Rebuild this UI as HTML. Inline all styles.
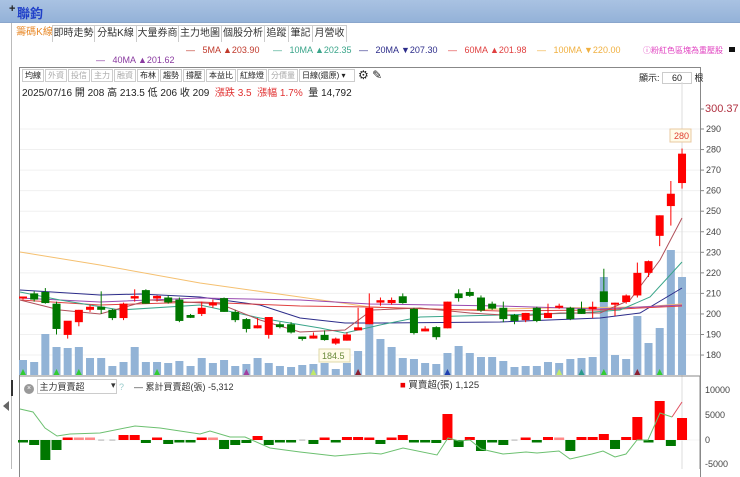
<!DOCTYPE html>
<html><head><meta charset="utf-8">
<style>
*{margin:0;padding:0;box-sizing:border-box}
body{width:740px;height:469px;overflow:hidden;background:#fff;font-family:"Liberation Sans","Noto Sans CJK TC",sans-serif;position:relative}
.top{position:absolute;left:0;top:0;width:740px;height:23px;background:linear-gradient(#a9c2e2,#94b2d8);border-bottom:1px solid #8aa6cc}
.top .t{position:absolute;left:17px;top:3px;font-size:13px;font-weight:bold;color:#1f3fc8}
.top .p{position:absolute;left:9px;top:3px;font-size:11px;color:#222;font-weight:bold}
.side{position:absolute;left:0;top:23px;width:12px;height:446px;border-right:1px solid #bbb;background:#fff}
.tabs{position:absolute;left:16px;top:25px;height:18px;display:flex}
.tabs div{font-size:10px;color:#333;border:1px solid #ccc;border-bottom:none;height:17px;line-height:15px;text-align:center;background:#fff;margin-right:-1px;white-space:nowrap;overflow:hidden}
.tabs div.a{color:#e88a2a;border:none}
.ma{position:absolute;font-size:9px;white-space:nowrap}
.frame{position:absolute;left:19px;top:67px;width:682px;height:410px;border:1px solid #888;border-bottom:none}
.tb{position:absolute;left:22px;top:69px;display:flex;font-size:8px}
.tb span{border:1px solid #ccc;padding:1px 2px;margin-right:1px;color:#222;height:13px;line-height:10px}
.tb span.g{color:#aaa}
.info{position:absolute;left:22px;top:84px;font-size:10px;color:#222;white-space:nowrap}
.ax{position:absolute;left:705px;font-size:9px;color:#444}
</style></head><body>
<div class="top"><span class="p">+</span><span class="t">聯鈞</span></div>
<div class="side"><div style="position:absolute;left:11px;top:357px;width:2px;height:16px;background:#333"></div><div style="position:absolute;left:3px;top:378px;width:0;height:0;border-top:5px solid transparent;border-bottom:5px solid transparent;border-right:6px solid #666"></div></div>
<div class="tabs"><div class="a" style="width:37px">籌碼K線</div><div style="width:43px">即時走勢</div><div style="width:43px">分點K線</div><div style="width:43px">大量券商</div><div style="width:44px">主力地圖</div><div style="width:44px">個股分析</div><div style="width:25px">追蹤</div><div style="width:25px">筆記</div><div style="width:35px">月營收</div></div>
<div class="ma" style="left:186px;top:45px;color:#c0392b">—&nbsp;&nbsp;&nbsp;5MA ▲203.90</div>
<div class="ma" style="left:273px;top:45px;color:#3aa58a">—&nbsp;&nbsp;&nbsp;10MA ▲202.35</div>
<div class="ma" style="left:359px;top:45px;color:#2c2c8a">—&nbsp;&nbsp;&nbsp;20MA ▼207.30</div>
<div class="ma" style="left:448px;top:45px;color:#e04040">—&nbsp;&nbsp;&nbsp;60MA ▲201.98</div>
<div class="ma" style="left:537px;top:45px;color:#f0b040">—&nbsp;&nbsp;&nbsp;100MA ▼220.00</div>
<div class="ma" style="left:643px;top:45px;color:#e040c0;font-size:8px">ⓘ粉紅色區塊為重壓股</div>
<div style="position:absolute;left:729px;top:47px;width:6px;height:5px;background:#111"></div>
<div class="ma" style="left:96px;top:55px;color:#8a3aa0">—&nbsp;&nbsp;&nbsp;40MA ▲201.62</div>
<div class="frame"></div>
<div class="tb"><span>均線</span><span class="g">外資</span><span class="g">投信</span><span class="g">主力</span><span class="g">融資</span><span>布林</span><span>趨勢</span><span>撐壓</span><span>本益比</span><span>紅綠燈</span><span class="g">分價量</span><span style="width:56px">日線(還原) ▾</span><span style="border:none;font-size:12px;line-height:11px">⚙ ✎</span></div>
<div class="ma" style="left:639px;top:71px;color:#222">顯示: <span style="display:inline-block;width:30px;border:1px solid #ccc;text-align:center">60</span> 根</div>
<div class="info">2025/07/16 開 208 高 213.5 低 206 收 209 &nbsp;<span style="color:#e03030">漲跌 3.5 &nbsp;漲幅 1.7%</span> &nbsp;量 14,792</div>
<div class="ax" style="top:103px;font-size:11px;color:#b03040">300.37</div>
<svg id="s" width="740" height="469" style="position:absolute;left:0;top:0"></svg>
<div class="ma" style="left:24px;top:379px;font-size:9px;color:#333"><span style="display:inline-block;width:10px;height:10px;border-radius:5px;background:#999;color:#fff;font-size:7px;text-align:center;line-height:10px">×</span> <span style="display:inline-block;width:80px;border:1px solid #ccc;padding-left:2px">主力買賣超 <span style="float:right">▾</span></span> <span style="color:#9cc">?</span>&nbsp;&nbsp;&nbsp; — 累計買賣超(張) -5,312</div>
<div class="ma" style="left:400px;top:377px;font-size:9.5px;color:#333"><span style="color:#e00">■</span> 買賣超(張) 1,125</div>
<div class="ax" style="top:385px">10000</div><div class="ax" style="top:410px">5000</div><div class="ax" style="top:435px">0</div><div class="ax" style="top:459px">-5000</div>
<script>
var C=[[208,208.5,207,208],[210,211,206,207],[210.7,212.6,205,205.3],[205,206,190,192.7],[189.8,190,188,196.7],[196,202,194,202],[202.5,204.5,201,203],[203,211,200,202.5],[202,202.5,197,198],[198,205.5,197,205],[208,212,206,208.2],[211.6,212,205,205],[208,209,206,208.3],[208,209,205,205.6],[207,208,196,196.6],[199,200,198,198.6],[200,206,199,203],[204.6,207,203,205],[207.7,208,201,201],[201,202,196,197],[197.5,198,191,192.7],[193.5,198,193,194],[189.8,198.5,188,198.5],[195,196,193,193.6],[195,196,190.5,191],[189,189,187,187.8],[188.5,191,188,189],[189.8,192,187,187.3],[185.6,188.5,185,188],[187,191,187,190],[192.5,203,192,193],[195,210,195,203],[206,208,204,206.2],[205.3,208,204.5,206.8],[208.6,210,205,205.3],[202.5,203,190,190.7],[192,194,191.5,192.4],[193.6,194,187.5,188.7],[193,206,193,206],[210,212,206,207.7],[210.7,212.5,208.3,208.8],[208,209,201,201.7],[205,206,202,202.6],[203,206,196,197.5],[199.5,200,195,196.6],[197,200.5,196,200.5],[203,203.5,196,196.6],[198,205,198,200.5],[203,205,202.5,204],[203,203.5,197,197.5],[202.5,206,200,200],[202.8,206,198,203],[211,222,205.8,205.8],[205,205.5,199,205],[205.8,209.5,205,209],[209,225,208,220],[220,226,218,225.7],[238,248,233,248],[252.5,264.7,243,258.5],[263.7,280.5,261,278]];
var V=[360,362,334,347,348,347,358,358,366,362,347,362,362,363,361,366,358,363,360,366,364,358,363,366,367,365,364,363,369,363,351,323,339,347,358,359,363,364,353,346,353,357,357,361,367,366,366,362,363,359,358,357,277,355,359,316,343,328,250,277];
var B=[-2,-5,-20,-10,2,.5,.5,0,0,5,5,-3,2,-4,-1.5,-1.5,2,.5,-9,-5,-3,4,-5,-2,-2,0,-4,2,-1.5,3,3,1.5,-4,2,5,-2,-2,-3,26,-7,3,-11,-1,-5,0,2,-2,3,.5,-11,3,3,6,-9,3,23,-1,39,-6,22];
function X(i){return 23+i*11.17}function Y(p){return 129+(290-p)*2.055}
var s='';
for(var p=180;p<=290;p+=10){var y=Y(p);s+='<line x1="20" x2="700" y1="'+y+'" y2="'+y+'" stroke="#f0f0f0"/><line x1="700" x2="704" y1="'+y+'" y2="'+y+'" stroke="#888"/><text x="706" y="'+(y+3)+'" font-size="9" fill="#444" font-family="Liberation Sans">'+p+'</text>';}
s+='<line x1="700" x2="704" y1="109" y2="109" stroke="#888"/><line x1="682" x2="682" y1="82" y2="469" stroke="#ddd"/>';
s+='<line x1="20" x2="700" y1="376" y2="376" stroke="#888"/>';
for(var i=0;i<60;i++){s+='<rect x="'+(X(i)-4)+'" y="'+V[i]+'" width="8" height="'+(375-V[i])+'" fill="#92b3d6"/>';}
var tri={0:'#3c3',3:'#3c3',5:'#3c3',12:'#3c3',20:'#a040a0',26:'#bfe86a',30:'#8b2030',38:'#2040b0',48:'#bfe86a',50:'#2a9a8a',52:'#3c3',55:'#8b2030',57:'#3c3'};
for(var k in tri){var x=X(+k);s+='<polygon points="'+(x-3)+',375 '+(x+3)+',375 '+x+',369" fill="'+tri[k]+'"/>';}
function pl(pts,c){s+='<polyline fill="none" stroke="'+c+'" stroke-width="1" points="'+pts+'"/>';}
pl('20,252 100,265 200,283 300,297 370,307 450,310 550,308 640,307 682,304','#f5c070');
pl('20,290 100,295 140,294 200,297 260,305 300,318 345,323 380,323 500,322 600,318 640,313 682,288','#2c2c8a');
pl('20,300 100,305 200,302 300,306 370,307 500,311 600,310 682,306','#e04040');
pl('20,298 100,302 200,298 300,300 370,304 500,306 600,309 682,305','#9a4ab0');
pl('20,292 60,300 120,310 200,305 260,318 320,328 345,333 380,325 420,317 500,315 580,313 620,310 650,297 682,262','#3aa58a');
pl('20,300 60,310 100,314 150,300 220,304 260,320 300,332 345,330 372,310 420,308 470,313 520,316 560,313 600,313 630,300 660,260 682,218','#b0505a');
for(var i=0;i<60;i++){var c=C[i],x=X(i),up=c[3]>=c[0],col=up?'#f00':'#070';var t=Y(Math.max(c[0],c[3])),b=Y(Math.min(c[0],c[3]));if(b-t<2){t-=1;b+=1;}
s+='<line x1="'+x+'" x2="'+x+'" y1="'+Y(c[1])+'" y2="'+Y(c[2])+'" stroke="'+col+'"/><rect x="'+(x-4)+'" y="'+t+'" width="8" height="'+(b-t)+'" fill="'+col+'"/>';}
s+='<rect x="319" y="349" width="31" height="13" fill="#fffbe8" stroke="#dfd8a8"/><text x="322" y="359" font-size="9" fill="#6a8a3a" font-family="Liberation Sans">184.5</text>';
s+='<rect x="670" y="129" width="21" height="13" fill="#fffbe8" stroke="#e8c8a0"/><text x="674" y="139" font-size="9" fill="#e04030" font-family="Liberation Sans">280</text>';
s+='<line x1="20" x2="700" y1="440" y2="440" stroke="#f4f4f4"/>';
for(var i=0;i<60;i++){var v=B[i],x=X(i);if(v==0){s+='<rect x="'+(x-3)+'" y="439.5" width="6" height="1.2" fill="#bbb"/>';continue;}var h=Math.max(Math.abs(v),2.5);var col=v>0?'#f00':'#070';if(v==.5)col='#f88';s+='<rect x="'+(x-5)+'" y="'+(v>0?440-h:440)+'" width="10" height="'+h+'" fill="'+col+'"/>';}
pl('20,409 33,412 45,428 57,436 70,434 100,433 135,426 160,428 200,434 210,431 230,437 245,437 270,448 300,452 335,456 370,453 381,454 403,448 437,455 448,438 459,441 470,440 481,449 503,454 526,452 537,453 559,451 570,459 592,454 603,451 615,457 626,454 637,440 648,440 660,413 672,417','#6cc070');
pl('672,417 682,402','#e05060');
s+='<line x1="700" x2="700" y1="376" y2="469" stroke="#888"/>';
document.getElementById('s').innerHTML=s;
</script>
</body></html>
